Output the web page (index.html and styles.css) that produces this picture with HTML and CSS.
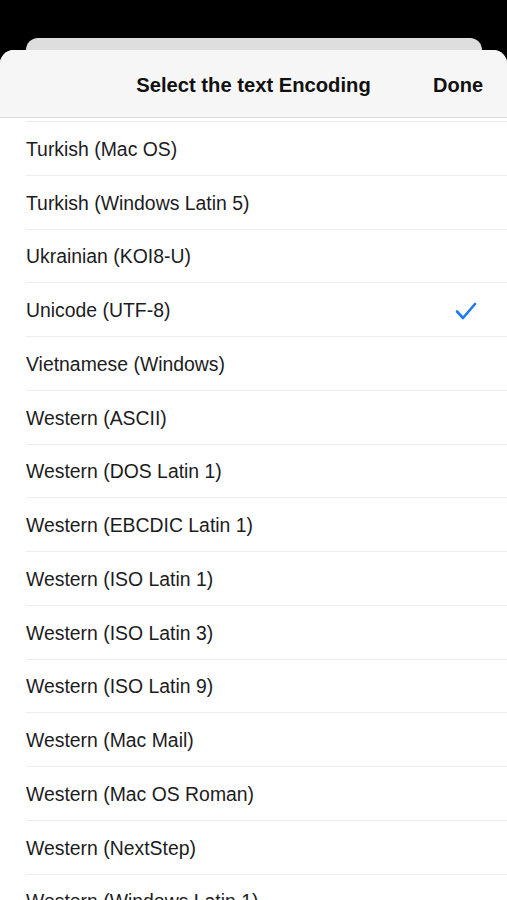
FILE: index.html
```html
<!DOCTYPE html>
<html lang="en">

<head>
    <meta charset="UTF-8">
    <meta name="viewport" content="width=device-width, initial-scale=1.0">
    <title>Text Encoding</title>
    <link rel="stylesheet" href="styles.css">
</head>

<body>
    <div class="screen">
        <div class="behind"></div>
        <div class="sheet">
            <div class="header">
                <span class="title">Select the text Encoding</span>
                <span class="done">Done</span>
            </div>
            <ul class="list">
                <li class="row">Turkish (Mac OS)</li>
                <li class="row">Turkish (Windows Latin 5)</li>
                <li class="row">Ukrainian (KOI8-U)</li>
                <li class="row selected">
                    <span>Unicode (UTF-8)</span>
                    <svg class="check" width="22" height="18" viewBox="0 0 22 18">
                        <path d="M2 9.5 L8 16 L20 2" fill="none" stroke="#1a7cf5" stroke-width="2.6" stroke-linecap="round" stroke-linejoin="round"/>
                    </svg>
                </li>
                <li class="row">Vietnamese (Windows)</li>
                <li class="row">Western (ASCII)</li>
                <li class="row">Western (DOS Latin 1)</li>
                <li class="row">Western (EBCDIC Latin 1)</li>
                <li class="row">Western (ISO Latin 1)</li>
                <li class="row">Western (ISO Latin 3)</li>
                <li class="row">Western (ISO Latin 9)</li>
                <li class="row">Western (Mac Mail)</li>
                <li class="row">Western (Mac OS Roman)</li>
                <li class="row">Western (NextStep)</li>
                <li class="row">Western (Windows Latin 1)</li>
            </ul>
        </div>
    </div>
</body>

</html>
```

FILE: styles.css
```css
* {
    box-sizing: border-box;
}

body {
    margin: 0;
    background-color: #000;
    font-family: 'Liberation Sans', Arial, sans-serif;
    color: #1c1c1e;
    overflow: hidden;
}

.screen {
    height: 900px;
    padding-top: 38px;
    overflow: hidden;
}

.behind {
    height: 24px;
    margin: 0 25px 0 26px;
    background-color: #dedede;
    border-radius: 12px 12px 0 0;
}

.sheet {
    margin-top: -12px;
    background-color: #fff;
    border-radius: 14px 14px 0 0;
    overflow: hidden;
}

.header {
    position: relative;
    height: 68px;
    padding-top: 3px;
    background-color: #f6f6f6;
    border-bottom: 1px solid #d9d9d9;
    display: flex;
    align-items: center;
    justify-content: center;
}

.title {
    font-size: 20.2px;
    font-weight: bold;
    color: #111;
}

.done {
    position: absolute;
    right: 24px;
    top: 24px;
    font-size: 20px;
    font-weight: bold;
    color: #111;
}

.list {
    list-style: none;
    margin: 0;
    padding: 3px 0 0 26px;
}

.list::before {
    content: "";
    display: block;
    height: 1px;
    background-color: #ebebeb;
}

.row {
    height: 53.75px;
    display: flex;
    align-items: center;
    justify-content: space-between;
    padding-top: 2px;
    padding-right: 30px;
    font-size: 19.4px;
    border-bottom: 1.5px solid #ededed;
}

.check {
    display: block;
}
```
